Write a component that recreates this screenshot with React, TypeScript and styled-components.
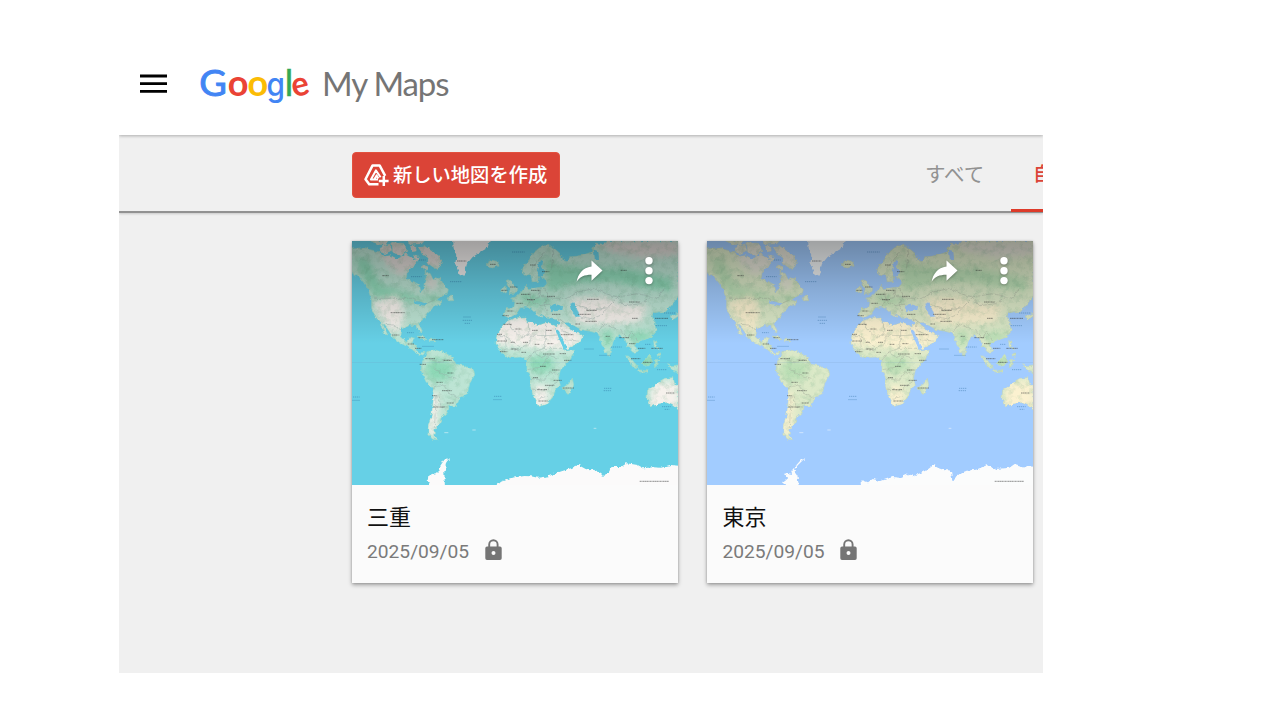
import React from 'react';
import styled, { createGlobalStyle } from 'styled-components';

const GlobalStyle = createGlobalStyle`
  * { box-sizing: border-box; }
  body {
    margin: 0;
    background: #fff;
    font-family: Roboto, 'Noto Sans CJK JP', sans-serif;
  }
`;

const Page = styled.div`
  width: 1280px;
  height: 720px;
  padding: 0 0 47px 119px;
  overflow: hidden;
`;

const AppFrame = styled.main`
  width: 924px;
  height: 673px;
  overflow: hidden;
  display: flex;
  flex-direction: column;
  background: #f0f0f0;
`;

const Header = styled.header`
  flex: none;
  height: 135px;
  padding: 50px 0 0 20px;
  display: flex;
  align-items: flex-start;
  background: #fff;
  box-shadow: 0 1px 3px rgba(0, 0, 0, 0.28);
  z-index: 1;
`;

const MenuButton = styled.button`
  border: 0;
  padding: 0;
  margin: 23px 22px 0 0;
  width: 29px;
  height: 21px;
  background: none;
  svg { display: block; }
`;

const Toolbar = styled.nav`
  flex: none;
  height: 78px;
  padding-left: 233px;
  display: flex;
  align-items: center;
  border-bottom: 2px solid #929292;
  box-shadow: 0 1px 2px rgba(0, 0, 0, 0.16);
`;

const CreateButton = styled.button`
  flex: none;
  width: 208px;
  height: 46px;
  margin-top: 3px;
  padding: 0 0 0 11px;
  border: 1px solid #e2513f;
  border-radius: 4px;
  display: flex;
  align-items: center;
  gap: 4px;
  background: #db4437;
  color: #fff;
  font: 500 19.3px/28px Roboto, 'Noto Sans CJK JP', sans-serif;
  white-space: nowrap;
  svg { flex: none; }
`;

const ButtonLabel = styled.span`
  padding-top: 2px;
`;

const Tabs = styled.div`
  margin-left: 340px;
  align-self: stretch;
  display: flex;
  flex: none;
`;

const Tab = styled.div<{ $active?: boolean }>`
  flex: none;
  width: 111px;
  height: 77px;
  padding: 26px 0 0 ${p => (p.$active ? 22 : 25)}px;
  font-size: ${p => (p.$active ? 19.3 : 20.5)}px;
  line-height: 28px;
  white-space: nowrap;
  font-weight: ${p => (p.$active ? 500 : 400)};
  color: ${p => (p.$active ? '#db4437' : '#929292')};
  border-bottom: 3px solid ${p => (p.$active ? '#dd3b2a' : 'transparent')};
`;

const CardList = styled.section`
  display: flex;
  gap: 29.4px;
  padding: 28px 0 0 233px;
`;

const Card = styled.article`
  flex: none;
  width: 326px;
  height: 342px;
  background: #fbfbfb;
  box-shadow: 0 2px 4px rgba(0, 0, 0, 0.34), 0 0 2px rgba(0, 0, 0, 0.16);
`;

const Thumbnail = styled.div`
  position: relative;
  height: 244px;
  > svg { display: block; }
`;

const Actions = styled.div`
  position: absolute;
  top: 15px;
  right: 24.5px;
  display: flex;
  gap: 41px;
  filter: drop-shadow(0 1px 1px rgba(0, 0, 0, 0.3));
`;

const CardBody = styled.div`
  padding: 17px 15px 0;
`;

const CardTitle = styled.h2`
  margin: 0;
  font-size: 22px;
  line-height: 32px;
  font-weight: 400;
  color: #111;
`;

const Meta = styled.div`
  display: flex;
  align-items: center;
  gap: 16px;
  height: 35px;
  color: #7a7a7a;
  font-size: 19.2px;
  line-height: 28px;
  svg { margin-top: -3px; }
`;

const DateText = styled.time`
  width: 102px;
  white-space: nowrap;
`;

type Theme = 'teal' | 'classic';

const palettes = {
  teal: {
    sea: '#66d0e6', land: '#bde4d4', green: '#8fd9b8', sand: '#f6f1ec', cold: '#dfdad6',
    ice: '#fbfafa', edge: '#a2dcc9', line: '#95aaa5',
  },
  classic: {
    sea: '#a2ccff', land: '#dce9c8', green: '#bcdfb6', sand: '#fbf1d0', cold: '#e3e2d6',
    ice: '#fbfcfc', edge: '#c4d8c1', line: '#a4aa9b',
  },
};

const LAND = [
  // North America
  'M20 42 60 38 78 44 100 50 118 64 140 62 158 72 172 66 184 56 198 64 206 76 222 72 214 88 200 98 188 112 186 132 204 138 222 148 228 172 238 162 240 144 246 126 242 108 258 116 268 138 284 126 298 148 312 164 308 178 286 186 276 196 296 200 286 212 268 210 256 226 250 236 240 250 222 264 234 288 228 294 214 272 194 270 172 282 170 304 186 322 200 308 210 310 202 326 216 330 214 346 228 354 242 352 236 360 220 356 202 342 188 330 164 322 146 306 132 285 120 270 102 255 90 240 82 220 82 195 72 165 60 145 45 125 30 118 20 112Z',
  'M104 256 112 260 122 282 130 300 124 298 112 278Z',
  // Arctic islands
  'M80 18 132 18 126 30 98 28Z', 'M108 36 136 28 142 46 122 56 106 50Z',
  'M142 22 178 26 188 48 168 62 146 52Z', 'M188 18 240 18 232 26 200 28Z',
  'M198 34 214 32 216 48 202 50Z', 'M222 40 244 34 262 46 278 62 294 74 288 90 282 104 266 96 250 84 254 66 236 60Z',
  'M208 60 222 62 220 72 210 70Z', 'M236 90 252 96 246 106 234 100Z',
  'M310 186 322 180 328 196 316 198Z',
  // Caribbean
  'M218 304 234 304 248 314 236 312Z', 'M254 314 272 312 274 320 256 320Z',
  // South America
  'M250 350 270 345 300 352 325 368 335 388 360 392 388 405 391 420 376 445 370 475 346 490 336 512 316 514 308 535 290 548 286 568 272 582 268 600 282 614 264 612 251 595 252 570 262 540 268 490 265 460 245 440 230 405 235 378Z',
  // Africa
  'M490 258 516 248 545 246 550 260 566 264 584 270 606 264 632 274 642 298 652 326 665 348 690 346 678 374 648 405 642 430 648 448 632 466 628 484 606 508 582 514 570 490 558 455 560 430 548 405 548 376 530 366 490 368 470 350 455 325 458 300 475 275Z',
  'M656 458 674 446 684 430 688 450 678 474 664 474Z',
  // Arabia
  'M632 276 655 262 684 284 700 294 718 303 702 324 665 342 650 315Z',
  // Scandinavia, Europe and Asia
  'M534 112 536 94 552 80 566 54 586 38 612 28 632 42 650 58 656 76 668 80 674 66 694 64 716 60 740 52 754 24 772 28 792 18 1003 18 1003 182 982 210 960 234 946 230 928 234 920 244 932 260 934 288 916 308 888 318 870 330 880 350 866 352 850 336 844 316 825 298 806 320 796 358 784 352 768 315 760 295 735 288 712 284 690 272 672 262 648 264 634 250 606 246 588 234 594 250 576 236 560 222 545 216 528 218 514 238 494 248 480 242 484 218 508 218 512 202 498 192 518 184 534 168 546 148 552 164 578 158 600 156 608 142 600 130 586 124 578 140 564 140 558 116 546 122Z',
  // British Isles, Iceland
  'M490 134 500 138 508 152 520 164 516 174 494 176 498 160 488 150Z', 'M470 160 486 156 486 170 470 174Z',
  'M430 80 444 76 462 80 460 94 444 99 430 92Z',
  // Japan, Philippines, Indonesia
  'M978 244 1003 234 1003 244 984 254Z', 'M928 320 938 318 936 334 944 344 930 338Z', 'M938 356 950 354 950 366 940 364Z',
  'M844 362 856 366 878 392 882 402 868 396Z', 'M880 404 910 408 908 414 882 410Z',
  'M894 380 916 360 924 374 914 392 898 394Z', 'M930 374 944 374 938 398 930 394Z', 'M970 386 986 392 1003 390 1003 414 986 408Z',
  'M790 350 798 356 796 364 790 360Z',
  // Australia
  'M910 464 930 454 948 438 962 430 985 428 986 440 1003 452 1003 526 984 510 966 502 944 506 920 514 908 490Z',
];

const GREENLAND = 'M326 10 438 10 430 38 410 50 385 66 368 86 358 122 343 112 333 88 336 60 328 40Z';

const INLAND_SEAS = [
  'M616 216 630 206 656 214 654 226 622 230Z', // Black Sea
  'M678 206 690 202 698 222 706 244 694 246 684 228Z', // Caspian
  'M584 80 594 74 590 96 602 110 596 124 584 124 578 104Z', // Baltic
  'M632 278 644 288 668 336 658 342 642 306Z', // Red Sea
  'M674 266 690 284 704 290 698 294 680 284Z', // Persian Gulf
  'M748 44 762 48 764 72 752 74Z',
  'M208 196 240 204 252 202 240 212 214 206Z', // Great Lakes
];

const BORDERS =
  'M90 190H208L236 210 268 196M122 268 148 270 172 286M492 260 500 280 532 308 554 298 552 262M458 302H482L532 340 560 322 556 300 604 302V268M604 302 640 300M604 302 600 340 566 352 548 376M482 302 486 342 530 344M486 342 470 348M600 340 650 340M566 352 590 366 616 362 642 372M550 404 590 396 616 362M560 430 598 436 616 410 642 420M562 462 602 466 640 440M580 490 610 484M640 252 660 262 684 284M670 190 700 172 750 160 790 178 820 186 880 176 940 190 960 160M700 212 740 226 790 218 820 186M706 246 740 254 770 240 790 218M760 292 778 268 830 286 850 310M540 190 560 196 590 184 630 190 670 190M600 160 612 184 600 210 612 230M556 172 560 196 548 214M590 184 580 160M560 196 586 212 614 208M256 374 286 380 326 370M268 398 300 420 336 430M266 460 296 450 320 478 344 490M280 480 290 514 310 516M276 480 270 580M560 100 580 80 600 48M626 42 622 100M654 262 650 286 676 296M662 314 700 318M822 190 840 212 892 206 920 186M850 310 860 290 882 318';

const LABELS = [
  [124, 122, 20], [160, 233, 42], [154, 300, 22], [352, 78, 28], [446, 88, 18], [490, 268, 26], [522, 282, 18],
  [572, 286, 18], [614, 286, 18], [466, 298, 16], [474, 318, 30], [505, 322, 12], [544, 322, 16], [578, 328, 14],
  [618, 326, 18], [668, 299, 38], [656, 356, 20], [670, 376, 22], [614, 357, 36], [510, 342, 18], [478, 350, 22],
  [538, 352, 14], [596, 394, 18], [574, 428, 16], [594, 464, 30], [616, 451, 28], [596, 498, 28], [672, 459, 34],
  [634, 405, 22], [640, 436, 24], [746, 193, 36], [870, 201, 32], [872, 250, 18], [720, 238, 38], [742, 226, 32],
  [740, 259, 34], [790, 304, 12], [700, 267, 14], [636, 238, 26], [620, 184, 24], [574, 166, 28], [560, 194, 24],
  [544, 178, 28], [604, 110, 22], [508, 156, 22], [480, 166, 18], [484, 242, 20], [498, 228, 18], [526, 205, 20],
  [840, 308, 30], [864, 326, 20], [892, 340, 22], [938, 340, 34], [874, 371, 28], [910, 382, 28], [952, 250, 40],
  [200, 327, 20], [222, 340, 20], [258, 371, 30], [310, 376, 24], [236, 388, 20], [318, 414, 18], [286, 442, 20],
  [308, 467, 30], [270, 482, 14], [284, 516, 34], [318, 504, 22], [280, 314, 34], [232, 308, 20], [566, 90, 18],
  [838, 106, 18], [978, 474, 26],
];

const SEA_LABELS = [
  [234, 75, 20], [216, 125, 32], [522, 51, 38], [334, 140, 34], [368, 246, 22], [370, 256, 30], [370, 265, 18],
  [198, 293, 20], [252, 334, 36], [460, 484, 22], [460, 494, 26], [36, 486, 20], [36, 496, 24], [790, 460, 22],
  [790, 467, 24], [734, 342, 28], [816, 336, 32], [910, 328, 16], [952, 272, 36], [976, 234, 34], [966, 515, 26],
  [968, 523, 14], [952, 404, 28], [782, 361, 34],
];

const ANTARCTICA: Record<Theme, string> = {
  teal: 'M447 762 470 740 497 730 537 723 560 724 580 728 612 724 647 710 680 700 702 690 724 702 737 706 752 704 777 722 794 712 798 696 830 696 847 685 880 690 898 700 927 697 950 698 980 690 1010 693V762ZM317 668 300 674 288 692 284 708 274 718 252 722 250 736 256 742 248 762H302L300 710 306 682Z',
  classic: 'M468 762 490 736 506 742 520 732 545 738 580 726 600 728 628 716 640 724 664 714 684 704 702 691 718 700 736 706 754 706 760 742 776 718 800 708 830 704 862 691 890 702 930 698 946 687 970 694 1010 695V762ZM318 668 304 676 288 694 276 708 278 720 252 714 264 730 248 742 272 762H300L294 720 284 706 296 690Z',
};

function WorldMap({ theme }: { theme: Theme }) {
  const c = palettes[theme];
  const land = LAND.join('');
  const id = (name: string) => `${theme}-${name}`;
  const ref = (name: string) => `url(#${id(name)})`;
  return (
    <svg width="326" height="244" viewBox="23 18 978 732" preserveAspectRatio="none">
      <defs>
        <clipPath id={id('land')}><path d={land} /></clipPath>
        <filter id={id('coast')} x="0" y="0" width="100%" height="100%" colorInterpolationFilters="sRGB">
          <feTurbulence type="fractalNoise" baseFrequency="0.09" numOctaves="2" seed="4" />
          <feDisplacementMap in="SourceGraphic" scale="12" xChannelSelector="R" yChannelSelector="G" />
          <feGaussianBlur stdDeviation="1" />
        </filter>
        <filter id={id('soft')} x="-20%" y="-20%" width="140%" height="140%"><feGaussianBlur stdDeviation="10" /></filter>
        <filter id={id('relief')} x="0" y="0" width="100%" height="100%" colorInterpolationFilters="sRGB">
          <feTurbulence type="fractalNoise" baseFrequency="0.05" numOctaves="4" seed="9" />
          <feColorMatrix values="0 0 0 0 0.36  0 0 0 0 0.62  0 0 0 0 0.47  2.4 0 0 0 -1.1" />
        </filter>
        <linearGradient id={id('shade')} x1="0" y1="0" x2="0" y2="1">
          <stop offset="0" stopColor="#000" stopOpacity="0.34" />
          <stop offset="0.2" stopColor="#000" stopOpacity="0.16" />
          <stop offset="0.42" stopColor="#000" stopOpacity="0" />
        </linearGradient>
      </defs>
      <rect x="23" y="18" width="978" height="732" fill={c.sea} />
      <g filter={ref('coast')}>
        <rect x="3" y="-2" width="1018" height="772" fill={c.sea} />
        <path d={land} fill={c.land} stroke={c.edge} strokeWidth="2" />
        <g clipPath={ref('land')}>
          <g filter={ref('soft')}>
            <g fill={c.green}>
              <path d="M30 66 70 72 110 150 180 170 230 190 290 180 280 200 180 200 90 185 50 120Z" />
              <ellipse cx="285" cy="405" rx="42" ry="34" />
              <ellipse cx="590" cy="388" rx="38" ry="26" />
              <path d="M600 60 640 90 720 96 850 100 980 130 985 170 900 160 800 140 700 145 610 170Z" />
              <path d="M520 170 600 190 640 200 560 215 530 195Z" />
              <path d="M840 290 900 290 940 300 880 330Z" />
              <ellipse cx="790" cy="310" rx="16" ry="28" />
              <ellipse cx="905" cy="380" rx="34" ry="20" />
            </g>
            <g fill={c.sand}>
              <path d="M85 205 160 180 180 230 170 280 150 300 120 260Z" />
              <path d="M450 255 560 240 650 260 720 300 690 340 640 346 450 330Z" />
              <path d="M566 452 612 450 610 520 570 520Z" />
              <path d="M680 190 780 185 840 210 910 210 890 260 800 270 690 265Z" />
              <path d="M262 470 284 480 280 560 268 610 250 590Z" />
              <path d="M925 440 1003 440V530H910Z" />
            </g>
            <g fill={c.cold}>
              <path d="M90 18 290 18 298 100 240 96 200 110 160 120 120 80Z" />
              <path d="M740 18 1003 18V60L900 70 800 50Z" />
              <path d="M242 120 270 130 280 160 250 160Z" />
            </g>
          </g>
          <rect x="23" y="18" width="978" height="732" filter={ref('relief')} opacity="0.22" />
          <path d={BORDERS} fill="none" stroke={c.line} strokeWidth="1.8" opacity="0.7" />
        </g>
        <path d={GREENLAND} fill={theme === 'teal' ? '#f4f1f0' : '#f2f5f6'} />
        <path d={INLAND_SEAS.join('')} fill={c.sea} />
        <path d={ANTARCTICA[theme]} fill={c.ice} />
      </g>
      <path d="M23 383H1001" stroke="#6d8fb5" strokeWidth="1.5" opacity="0.35" />
      <g stroke="#333" strokeWidth="3" opacity="0.52" strokeDasharray="5 1 3 1">
        {LABELS.map(([x, y, w], i) => <path key={i} d={`M${x - w / 2} ${y}h${w}`} />)}
      </g>
      <g stroke="#25679a" strokeWidth="3" opacity="0.38" strokeDasharray="4 2">
        {SEA_LABELS.map(([x, y, w], i) => <path key={i} d={`M${x - w / 2} ${y}h${w}`} />)}
      </g>
      <path d="M886 739H974" stroke="#777" strokeWidth="4" strokeDasharray="5 1 3 1" opacity="0.65" />
      <path d="M300 593h12M384 585h10M748 580h8" stroke={c.ice} strokeWidth="3" opacity="0.5" />
      <rect x="23" y="18" width="978" height="732" fill={ref('shade')} />
    </svg>
  );
}

function Logo() {
  return (
    <svg width="272" height="72" viewBox="190 50 272 72" aria-label="Google My Maps">
      <g fontFamily="Lato, sans-serif" fontSize="36" fontWeight="700">
        <text transform="translate(199.2 96) scale(1.05 1.02)" fill="#4285f4" fontWeight="400" stroke="#4285f4" strokeWidth="0.9">G</text>
        <text x="227.8" y="96.3" fill="#ea4335">o</text>
        <text x="247.6" y="96.3" fill="#fbbc05">o</text>
        <text transform="translate(266.4 95.8) scale(0.93 1)" fill="#4285f4" fontFamily="Inter, sans-serif" fontSize="32" fontWeight="500">g</text>
        <text x="284.8" y="95.5" fill="#34a853" fontWeight="400" stroke="#34a853" strokeWidth="0.5">l</text>
        <text transform="translate(294 97.5) rotate(-14) scale(0.96 1)" fill="#ea4335" fontSize="34">e</text>
      </g>
      <text x="322" y="96" fill="#757575" fontFamily="Lato, sans-serif" fontSize="33" textLength="127.5" lengthAdjust="spacing">My Maps</text>
    </svg>
  );
}

function MapPlusIcon() {
  return (
    <svg width="25" height="26" viewBox="0 0 25 26" fill="none" stroke="#fff" strokeWidth="2.5" strokeLinejoin="round">
      <path d="M14.5 22.3H5.2L1.5 17.2 8.6 3.4H15.6L21.2 13.8" />
      <path d="M14 17.4H6.9L11.9 8.4 16.6 15.2M10.2 17.4 12.6 13.4 14.4 16.6" strokeWidth="2" />
      <path d="M19.8 14V24M14.8 19H24.6" />
    </svg>
  );
}

function LockIcon() {
  return (
    <svg width="17" height="22" viewBox="0 0 17 22">
      <path d="M4.2 9V5.4a4.2 4.2 0 0 1 8.4 0V9" fill="none" stroke="#757575" strokeWidth="1.9" />
      <path fillRule="evenodd" fill="#757575" d="M2 7.6H15a1.7 1.7 0 0 1 1.7 1.7V19.3A1.7 1.7 0 0 1 15 21H2A1.7 1.7 0 0 1 .3 19.3V9.3A1.7 1.7 0 0 1 2 7.6ZM8.5 12a2 2 0 1 0 0 4 2 2 0 0 0 0-4Z" />
    </svg>
  );
}

function MapCard({ title, theme }: { title: string; theme: Theme }) {
  return (
    <Card>
      <Thumbnail>
        <WorldMap theme={theme} />
        <Actions>
          <svg width="27" height="30" viewBox="0 0 27 30" fill="#fff">
            <path d="M15.5 4.5 26.5 14.5 15.5 24.7V18.7C8.5 18.7 4 20.6.6 25.7 2 18 6.5 11.6 15.5 10.4Z" />
          </svg>
          <svg width="10" height="30" viewBox="0 0 10 30" fill="#fff">
            <circle cx="5" cy="4.8" r="3.7" /><circle cx="5" cy="14.7" r="3.7" /><circle cx="5" cy="24.6" r="3.7" />
          </svg>
        </Actions>
      </Thumbnail>
      <CardBody>
        <CardTitle>{title}</CardTitle>
        <Meta><DateText>2025/09/05</DateText><LockIcon /></Meta>
      </CardBody>
    </Card>
  );
}

export default function App() {
  return (
    <Page>
      <GlobalStyle />
      <AppFrame>
        <Header>
          <MenuButton aria-label="メニュー">
            <svg width="29" height="21" viewBox="0 0 29 21">
              <path d="M1 3H28M1 10.7H28M1 18.3H28" stroke="#000" strokeWidth="2.8" />
            </svg>
          </MenuButton>
          <Logo />
        </Header>
        <Toolbar>
          <CreateButton><MapPlusIcon /><ButtonLabel>新しい地図を作成</ButtonLabel></CreateButton>
          <Tabs>
            <Tab>すべて</Tab>
            <Tab $active>自</Tab>
          </Tabs>
        </Toolbar>
        <CardList>
          <MapCard title="三重" theme="teal" />
          <MapCard title="東京" theme="classic" />
        </CardList>
      </AppFrame>
    </Page>
  );
}
